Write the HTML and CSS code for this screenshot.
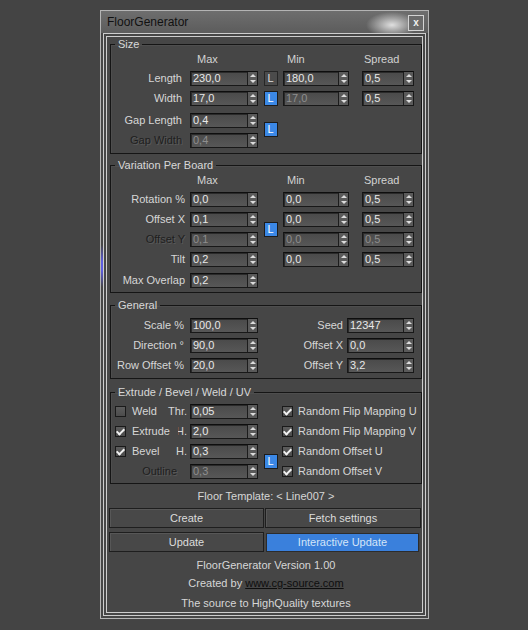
FILE: index.html
```html
<!DOCTYPE html>
<html lang="en">
<head>
  <meta charset="UTF-8" />
  <meta name="viewport" content="width=device-width, initial-scale=1.0"/>
  <title>FloorGenerator</title>
  <link rel="stylesheet" href="styles.css">
</head>
<body>
  <div class="window">
    <div class="title">
      <span>FloorGenerator</span>
      <span class="close">x</span>
    </div>

    <div class="frame">
      <!-- Size -->
      <fieldset class="group first">
        <legend>Size</legend>
        <div class="grid size">
          <span class="head h-max">Max</span>
          <span class="head h-min">Min</span>
          <span class="head h-spread">Spread</span>

          <span class="label">Length</span>
          <span class="field max"><span class="value">230,0</span><span class="spin"></span></span>
          <span class="lock">L</span>
          <span class="field min"><span class="value">180,0</span><span class="spin"></span></span>
          <span class="field spread"><span class="value">0,5</span><span class="spin"></span></span>

          <span class="label">Width</span>
          <span class="field max"><span class="value">17,0</span><span class="spin"></span></span>
          <span class="lock on">L</span>
          <span class="field min off"><span class="value">17,0</span><span class="spin"></span></span>
          <span class="field spread"><span class="value">0,5</span><span class="spin"></span></span>

          <span class="label push">Gap Length</span>
          <span class="field max push"><span class="value">0,4</span><span class="spin"></span></span>
          <span class="lock on tall">L</span>

          <span class="label off">Gap Width</span>
          <span class="field max off"><span class="value">0,4</span><span class="spin"></span></span>
        </div>
      </fieldset>

      <!-- Variation Per Board -->
      <fieldset class="group">
        <legend>Variation Per Board</legend>
        <div class="grid variation">
          <span class="head h-max">Max</span>
          <span class="head h-min">Min</span>
          <span class="head h-spread">Spread</span>

          <span class="label">Rotation %</span>
          <span class="field max"><span class="value">0,0</span><span class="spin"></span></span>
          <span class="field min"><span class="value">0,0</span><span class="spin"></span></span>
          <span class="field spread"><span class="value">0,5</span><span class="spin"></span></span>

          <span class="label">Offset X</span>
          <span class="field max"><span class="value">0,1</span><span class="spin"></span></span>
          <span class="lock on tall">L</span>
          <span class="field min"><span class="value">0,0</span><span class="spin"></span></span>
          <span class="field spread"><span class="value">0,5</span><span class="spin"></span></span>

          <span class="label off">Offset Y</span>
          <span class="field max off"><span class="value">0,1</span><span class="spin"></span></span>
          <span class="field min off"><span class="value">0,0</span><span class="spin"></span></span>
          <span class="field spread off"><span class="value">0,5</span><span class="spin"></span></span>

          <span class="label">Tilt</span>
          <span class="field max"><span class="value">0,2</span><span class="spin"></span></span>
          <span class="field min"><span class="value">0,0</span><span class="spin"></span></span>
          <span class="field spread"><span class="value">0,5</span><span class="spin"></span></span>

          <span class="label nudge">Max Overlap</span>
          <span class="field max nudge"><span class="value">0,2</span><span class="spin"></span></span>
        </div>
      </fieldset>

      <!-- General -->
      <fieldset class="group">
        <legend>General</legend>
        <div class="grid general">
          <span class="label">Scale %</span>
          <span class="field max"><span class="value">100,0</span><span class="spin"></span></span>
          <span class="label right">Seed</span>
          <span class="field wide"><span class="value">12347</span><span class="spin"></span></span>

          <span class="label">Direction °</span>
          <span class="field max"><span class="value">90,0</span><span class="spin"></span></span>
          <span class="label right">Offset X</span>
          <span class="field wide"><span class="value">0,0</span><span class="spin"></span></span>

          <span class="label">Row Offset %</span>
          <span class="field max"><span class="value">20,0</span><span class="spin"></span></span>
          <span class="label right">Offset Y</span>
          <span class="field wide"><span class="value">3,2</span><span class="spin"></span></span>
        </div>
      </fieldset>

      <!-- Extrude / Bevel / Weld / UV -->
      <fieldset class="group">
        <legend>Extrude / Bevel / Weld / UV</legend>
        <div class="grid extrude">
          <span class="opt"><span class="check"></span><span class="name">Weld</span><span class="short">Thr.</span></span>
          <span class="field max"><span class="value">0,05</span><span class="spin"></span></span>
          <span class="opt-r"><span class="check on"></span>Random Flip Mapping U</span>

          <span class="opt"><span class="check on"></span><span class="name">Extrude</span><span class="cut"><span>H.</span></span></span>
          <span class="field max"><span class="value">2,0</span><span class="spin"></span></span>
          <span class="opt-r"><span class="check on"></span>Random Flip Mapping V</span>

          <span class="opt"><span class="check on"></span><span class="name">Bevel</span><span class="short">H.</span></span>
          <span class="field max"><span class="value">0,3</span><span class="spin"></span></span>
          <span class="lock on tall">L</span>
          <span class="opt-r"><span class="check on"></span>Random Offset U</span>

          <span class="label off outline">Outline</span>
          <span class="field max off"><span class="value">0,3</span><span class="spin"></span></span>
          <span class="opt-r"><span class="check on"></span>Random Offset V</span>
        </div>
      </fieldset>

      <p class="template">Floor Template: &lt; Line007 &gt;</p>

      <div class="buttons">
        <button class="btn">Create</button>
        <button class="btn">Fetch settings</button>
        <button class="btn">Update</button>
        <button class="btn active">Interactive Update</button>
      </div>

      <div class="about">
        <p>FloorGenerator Version 1.00</p>
        <p>Created by <span class="link">www.cg-source.com</span></p>
        <p>The source to HighQuality textures</p>
      </div>
    </div>
  </div>
</body>
</html>
```

FILE: styles.css
```css
* {
  margin: 0;
  padding: 0;
  box-sizing: border-box;
}

body {
  background: #444;
  font-family: "Liberation Sans", Arial, sans-serif;
  font-size: 11px;
  color: #d6d6d6;
  padding: 10px 0 0 100px;
}

.window {
  width: 329px;
  border: 1px solid #b4b4b4;
  background: linear-gradient(#464646, #5c5ce0 40%, #5c5ce0 60%, #464646) 0 234px / 3px 42px no-repeat, #464646;
}

.title {
  height: 22px;
  display: flex;
  align-items: center;
  justify-content: space-between;
  padding: 0 4px 0 6px;
  font-size: 12px;
  color: #111;
  background:
    radial-gradient(26px 13px at 291px 14px, rgba(255, 255, 255, 0.8), rgba(255, 255, 255, 0)),
    linear-gradient(#6e6e6e, #5c5c5c);
}

.close {
  width: 16px;
  height: 16px;
  margin-top: 2px;
  border: 1px solid #d4d4d4;
  background: #6a6a6a;
  color: #f0f0f0;
  font-size: 10px;
  font-weight: bold;
  line-height: 13px;
  text-align: center;
}

.frame {
  margin: 0 2px 2px;
  border: 4px double #cdcdcd;
  padding: 0 0 2px 3px;
}

/* group boxes */
.group {
  border: 1px solid #151515;
  box-shadow: inset 1px 1px 0 #4e4e4e;
  padding: 0 0 5px;
  margin-top: 5px;
  min-width: 0;
}

.group.first {
  margin-top: 1px;
}

.group legend {
  margin-left: 4px;
  padding: 0 3px;
  line-height: 13px;
  color: #d8d8d8;
}

.grid {
  display: grid;
  grid-template-columns: 79px 68px 25px 79px 52px;
  row-gap: 5px;
  align-items: center;
}

.grid.size,
.grid.variation {
  padding-top: 2px;
}

.grid.general {
  grid-template-columns: 79px 68px 89px 67px;
  padding-top: 6px;
}

.grid.extrude {
  grid-template-columns: 79px 68px 25px auto;
  padding-top: 5px;
}

.group:nth-of-type(2) {
  padding-bottom: 4px;
}

.group:nth-of-type(3) {
  margin-top: 6px;
}

.group:nth-of-type(4) {
  margin-top: 7px;
  padding-bottom: 4px;
}

.head {
  line-height: 13px;
  color: #d2d2d2;
}

.h-max {
  grid-column: 2;
  padding-left: 7px;
}

.h-min {
  grid-column: 4;
  padding-left: 4px;
}

.h-spread {
  grid-column: 5;
  padding-left: 2px;
}

.label {
  grid-column: 1;
  text-align: right;
  padding-right: 5px;
  line-height: 15px;
  white-space: nowrap;
}

.size .label {
  padding-right: 8px;
}

.general .label {
  padding-right: 6px;
}

.label.right {
  grid-column: 3;
  padding-right: 4px;
}

.label.off {
  color: #1e1e1e;
  text-shadow: 1px 1px 0 #5a5a5a;
}

.label.outline {
  padding-right: 13px;
}

.push {
  margin-top: 2px;
}

.nudge {
  margin-top: 1px;
}

/* spinner fields */
.field {
  display: flex;
  height: 15px;
  border: 1px solid #181818;
  border-top-color: #0e0e0e;
}

.field.max {
  grid-column: 2;
  width: 68px;
}

.field.min {
  grid-column: 4;
  width: 66px;
}

.field.spread {
  grid-column: 5;
  width: 52px;
}

.field.wide {
  grid-column: 4;
  width: 67px;
}

.value {
  flex: 1;
  padding-left: 2px;
  line-height: 13px;
  color: #e8e8e8;
  background: linear-gradient(#4a4a4a, #575757);
  box-shadow: inset 1px 1px 0 #2a2a2a;
  white-space: nowrap;
  overflow: hidden;
}

.field.off .value {
  color: #8e8e8e;
}

.spin {
  width: 10px;
  display: flex;
  flex-direction: column;
  align-items: center;
  justify-content: center;
  gap: 3px;
  border-left: 1px solid #1c1c1c;
  background: #5a5a5a;
}

.spin::before {
  content: "";
  border-left: 3px solid transparent;
  border-right: 3px solid transparent;
  border-bottom: 3px solid #dcdcdc;
}

.spin::after {
  content: "";
  border-left: 3px solid transparent;
  border-right: 3px solid transparent;
  border-top: 3px solid #dcdcdc;
}

/* lock buttons */
.lock {
  grid-column: 3;
  justify-self: center;
  width: 14px;
  height: 15px;
  border: 1px solid #262626;
  background: #4b4b4b;
  color: #dedede;
  line-height: 13px;
  text-align: center;
}

.lock.on {
  background: #3b88e6;
  color: #fff;
  border-color: #1c1c1c;
}

.lock.tall {
  grid-row: span 2;
}

/* checkboxes */
.check {
  flex: none;
  width: 11px;
  height: 11px;
  border: 1px solid #1a1a1a;
  background: linear-gradient(#5c5c5c, #4c4c4c);
  display: inline-flex;
  align-items: center;
  justify-content: center;
}

.check.on::after {
  content: "";
  width: 3px;
  height: 6px;
  margin-top: -2px;
  border: solid #f2f2f2;
  border-width: 0 2px 2px 0;
  transform: rotate(45deg);
}

.opt {
  grid-column: 1;
  display: flex;
  align-items: center;
  padding-left: 4px;
  line-height: 15px;
  white-space: nowrap;
}

.opt .name {
  margin-left: 6px;
}

.opt .short {
  margin-left: auto;
  padding-right: 3px;
}

.opt .cut {
  margin-left: auto;
  margin-right: 3px;
  width: 9px;
  display: inline-flex;
  justify-content: flex-end;
  overflow: hidden;
}

.opt .cut span {
  flex: none;
}

.opt-r {
  grid-column: 4;
  display: flex;
  align-items: center;
  gap: 5px;
  margin-left: -1px;
  line-height: 15px;
  white-space: nowrap;
}

/* bottom */
.template {
  margin-top: 5px;
  line-height: 14px;
  text-align: center;
}

.buttons {
  display: grid;
  grid-template-columns: 155px 156px;
  column-gap: 1px;
  row-gap: 4px;
  margin: 5px 0 0 -1px;
}

.btn {
  height: 20px;
  padding: 0;
  border: 1px solid #1e1e1e;
  background: #484848;
  box-shadow: inset 1px 1px 0 #575757;
  color: #dcdcdc;
  font: inherit;
  line-height: 18px;
  text-align: center;
}

.btn.active {
  height: 19px;
  margin: 1px 2px 0 1px;
  border-color: #2c2c2c;
  background: #3a80dc;
  box-shadow: none;
  color: #d4e5f8;
  line-height: 17px;
}

.about {
  text-align: center;
  line-height: 14px;
}

.about p:nth-child(1) {
  margin-top: 6px;
}

.about p:nth-child(2) {
  margin-top: 4px;
}

.about p:nth-child(3) {
  margin-top: 6px;
}

.link {
  color: #0e0e0e;
  text-decoration: underline;
}
```
